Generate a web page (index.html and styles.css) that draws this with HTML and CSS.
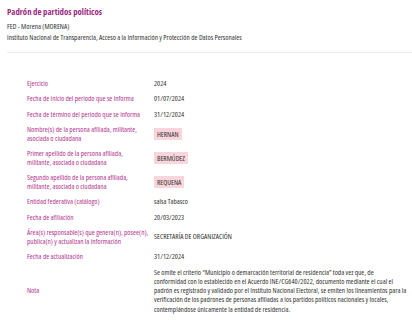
FILE: index.html
```html
<!DOCTYPE html>
<html lang="es">
<head>
<meta charset="utf-8">
<link rel="stylesheet" href="styles.css">
</head>
<body>
<div class="page">
  <header class="head">
    <h1 class="title">Padrón de partidos políticos</h1>
    <div class="sub">FED - Morena (MORENA)</div>
    <div class="sub">Instituto Nacional de Transparencia, Acceso a la Información y Protección de Datos Personales</div>
  </header>
  <div class="table">
    <div class="row"><div class="label">Ejercicio</div><div class="value">2024</div></div>
    <div class="row"><div class="label">Fecha de inicio del periodo que se informa</div><div class="value">01/07/2024</div></div>
    <div class="row"><div class="label">Fecha de término del periodo que se informa</div><div class="value">31/12/2024</div></div>
    <div class="row"><div class="label">Nombre(s) de la persona afiliada, militante, asociada o ciudadana</div><div class="value"><span class="badge">HERNAN</span></div></div>
    <div class="row"><div class="label">Primer apellido de la persona afiliada,<br>militante, asociada o ciudadana</div><div class="value"><span class="badge">BERMÚDEZ</span></div></div>
    <div class="row"><div class="label">Segundo apellido de la persona afiliada,<br>militante, asociada o ciudadana</div><div class="value"><span class="badge">REQUENA</span></div></div>
    <div class="row"><div class="label">Entidad federativa (catálogo)</div><div class="value">salsa Tabasco</div></div>
    <div class="row"><div class="label">Fecha de afiliación</div><div class="value">20/03/2023</div></div>
    <div class="row"><div class="label">Área(s) responsable(s) que genera(n), posee(n), publica(n) y actualizan la información</div><div class="value">SECRETARÍA DE ORGANIZACIÓN</div></div>
    <div class="row"><div class="label">Fecha de actualización</div><div class="value">31/12/2024</div></div>
    <div class="row"><div class="label">Nota</div><div class="value note">Se omite el criterio “Municipio o demarcación territorial de residencia” toda vez que, de conformidad con lo establecido en el Acuerdo INE/CG640/2022, documento mediante el cual el padrón es registrado y validado por el Instituto Nacional Electoral, se emiten los lineamientos para la verificación de los padrones de personas afiliadas a los partidos políticos nacionales y locales, contemplándose únicamente la entidad de residencia.</div></div>
  </div>
</div>
</body>
</html>
```
FILE: styles.css
```css
html, body {
  margin: 0;
  padding: 0;
  background: #ffffff;
}
body {
  font-family: "Open Sans", sans-serif;
  font-stretch: 80%;
  color: #333333;
  width: 412px;
  height: 328px;
  overflow: hidden;
}
.page {
  padding: 0 0 0 7px;
}
.head {
  padding-top: 6px;
  padding-bottom: 9.5px;
  border-bottom: 1px solid #ececec;
}
.title {
  margin: 0 0 1.5px 0;
  font-size: 8.8px;
  line-height: 13px;
  font-weight: 700;
  color: #9c2a82;
}
.sub {
  font-size: 7.3px;
  line-height: 11px;
  color: #333;
}
.table {
  display: flex;
  flex-direction: column;
  padding: 22px 0 0 20px;
}
.row {
  display: grid;
  grid-template-columns: 127px 1fr;
  align-items: center;
  padding: 3.5px 0;
}
.label {
  font-size: 7.3px;
  line-height: 8.5px;
  color: #b3348f;
  padding-right: 2px;
}
.value {
  font-size: 7.3px;
  line-height: 8.5px;
  color: #333;
}
.badge {
  display: inline-block;
  background: #fad5dd;
  padding: 2px 3px;
  line-height: 8px;
}
.note {
  line-height: 9.3px;
  padding-right: 5px;
}
```
